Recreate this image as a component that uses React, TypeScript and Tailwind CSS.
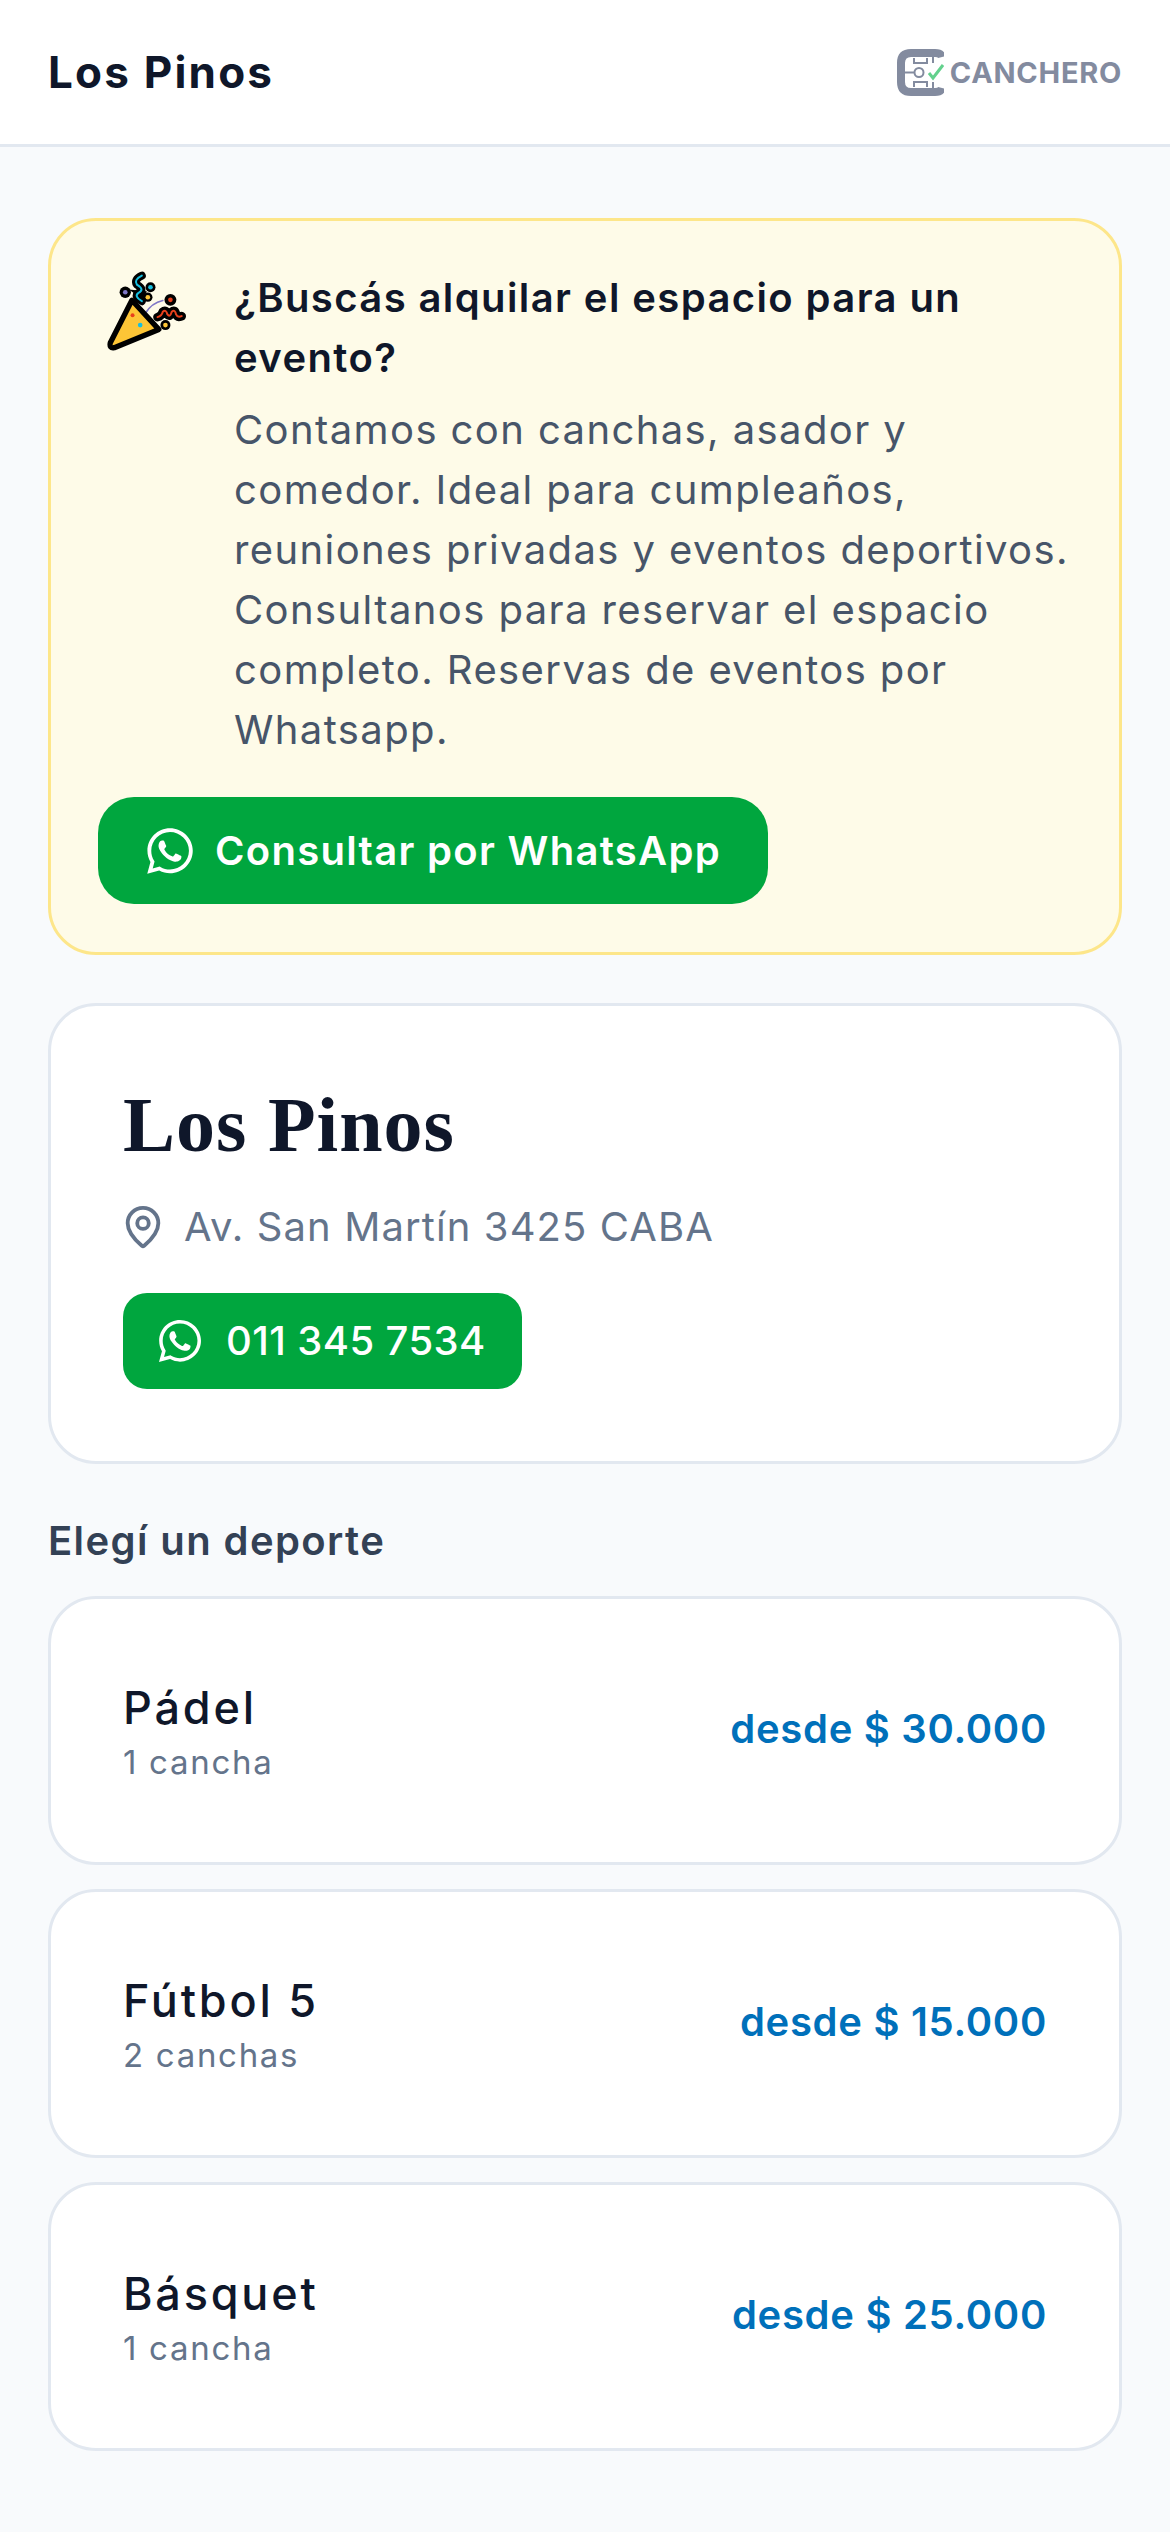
import React from 'react';
import { FaWhatsapp } from 'react-icons/fa';
import { MapPin } from 'lucide-react';

const Logo = () => (
  <div className="flex items-center gap-[6px]">
    <svg width="47" height="47" viewBox="0 0 47 47" fill="none">
      <path d="M45 8 Q44 4 38 4 H14 Q4 4 4 14 V33 Q4 43 14 43 H38 Q44 43 45 39" stroke="#838b9f" strokeWidth="8" />
      <path d="M36 8 V14 M8 23.5 H18 M17 9 V14 H30 V9 M17 38 V33 H30 V38 M36 33 V39" stroke="#838b9f" strokeWidth="2" />
      <circle cx="22" cy="23.5" r="4.5" stroke="#838b9f" strokeWidth="2" />
      <path d="M32 24 L36 29 L46 16" stroke="#63d18d" strokeWidth="3" />
    </svg>
    <span className="text-[29px] leading-none font-bold tracking-[0.7px] text-[#838b9f]">CANCHERO</span>
  </div>
);

// party popper, coordinates taken from the 3x crop
const Party = () => (
  <svg width="83" height="83" viewBox="50 55 250 250" fill="none" strokeLinecap="round" strokeLinejoin="round">
    <path d="M155 78 Q130 90 140 105 Q165 120 145 130 Q130 140 155 155" stroke="#000" strokeWidth="24" />
    <circle cx="105" cy="128" r="17" fill="#000" />
    <circle cx="181" cy="113" r="15" fill="#000" />
    <circle cx="173" cy="143" r="14" fill="#000" />
    <path d="M115 120 L170 125 L160 150 Z" fill="#000" />
    <path d="M155 78 Q130 90 140 105 Q165 120 145 130 Q130 140 155 155" stroke="#16bfe0" strokeWidth="6" />
    <circle cx="105" cy="128" r="7" fill="#7f77c6" />
    <circle cx="181" cy="113" r="7" fill="#16bfe0" />
    <circle cx="173" cy="143" r="7" fill="#fdc536" />
    <path d="M165 192 Q185 160 218 153" stroke="#7f77c6" strokeWidth="5" />
    <circle cx="241" cy="151" r="18" fill="#000" />
    <circle cx="226" cy="227" r="15" fill="#000" />
    <path d="M202 203 Q215 200 218 187 Q228 178 232 195 Q240 205 245 187 Q255 178 258 195 Q262 205 275 200" stroke="#000" strokeWidth="26" />
    <circle cx="241" cy="151" r="7" fill="#e8401c" />
    <circle cx="226" cy="227" r="7" fill="#fdc536" />
    <path d="M202 203 Q215 200 218 187 Q228 178 232 195 Q240 205 245 187 Q255 178 258 195 Q262 205 275 200" stroke="#e8401c" strokeWidth="6" />
    <path d="M125 152 L206 240 L72 295 Q56 298 60 280 Z" fill="#fdc536" stroke="#000" strokeWidth="16" />
    <circle cx="127" cy="197" r="6" fill="#e8401c" />
    <circle cx="150" cy="227" r="7" fill="#16bfe0" />
  </svg>
);

const courts = [
  { name: 'Pádel', count: '1 cancha', price: 'desde $ 30.000' },
  { name: 'Fútbol 5', count: '2 canchas', price: 'desde $ 15.000' },
  { name: 'Básquet', count: '1 cancha', price: 'desde $ 25.000' },
];

export default function App() {
  return (
    <div className="min-h-screen bg-[#f8fafc] font-['Inter',sans-serif]">
      <header className="flex h-[147px] items-center justify-between border-b-[3px] border-[#e2e8f0] bg-white px-12">
        <h1 className="text-[44px] font-bold tracking-[2.2px] text-[#0f172a]">Los Pinos</h1>
        <Logo />
      </header>

      <main className="flex flex-col px-12 pt-[71px]">
        <section className="rounded-[48px] border-[3px] border-[#fde68a] bg-[#fefbe8] px-[47px] pt-[47px] pb-[48px]">
          <div className="flex">
            <div className="w-[136px] shrink-0 pl-[9px]">
              <Party />
            </div>
            <div>
              <h2 className="text-[40px] leading-[60px] font-semibold tracking-[1.4px] text-[#0f172a]">¿Buscás alquilar el espacio para un evento?</h2>
              <p className="mt-3 text-[40px] leading-[60px] tracking-[1.4px] text-[#475569]">
                Contamos con canchas, asador y comedor. Ideal para cumpleaños, reuniones privadas y eventos deportivos. Consultanos para reservar el espacio completo. Reservas de eventos por Whatsapp.
              </p>
            </div>
          </div>
          <button className="mt-[37px] flex h-[107px] w-[670px] items-center gap-[19px] rounded-[36px] bg-[#00a63e] pl-[46px] text-[40px] font-semibold tracking-[1.3px] text-white">
            <FaWhatsapp className="h-[52px] w-[52px]" />
            Consultar por WhatsApp
          </button>
        </section>

        <section className="mt-12 rounded-[48px] border-[3px] border-[#e2e8f0] bg-white p-[72px]">
          <h2 className="font-['Liberation_Serif',serif] text-[78px] leading-[94px] font-bold tracking-[1px] text-[#0f172a]">Los Pinos</h2>
          <div className="mt-[25px] flex items-center gap-[18px] text-[#64748b]">
            <MapPin className="-ml-[3px] h-[46px] w-[46px]" strokeWidth={2} />
            <span className="text-[40px] leading-[60px] tracking-[1.1px]">Av. San Martín 3425 CABA</span>
          </div>
          <button className="mt-9 flex h-[96px] w-[399px] items-center gap-[22px] rounded-[24px] bg-[#00a63e] pl-[33px] text-[40px] font-medium tracking-[0.4px] text-white">
            <FaWhatsapp className="h-[48px] w-[48px]" />
            011 345 7534
          </button>
        </section>

        <h3 className="mt-[47px] text-[40px] leading-[60px] font-semibold tracking-[1.4px] text-[#334155]">Elegí un deporte</h3>
        <div className="mt-[25px] flex flex-col gap-[24px] pb-[70px]">
          {courts.map((c) => (
            <div key={c.name} className="flex h-[269px] items-center justify-between rounded-[48px] border-[3px] border-[#e2e8f0] bg-white px-[72px]">
              <div>
                <div className="text-[45px] leading-[62px] font-medium tracking-[2.8px] text-[#0f172a]">{c.name}</div>
                <div className="text-[33px] leading-[46px] tracking-[1.7px] text-[#64748b]">{c.count}</div>
              </div>
              <div className="pb-[3px] text-[40px] font-semibold tracking-[0.7px] text-[#0070ba]">{c.price}</div>
            </div>
          ))}
        </div>
      </main>
    </div>
  );
}
